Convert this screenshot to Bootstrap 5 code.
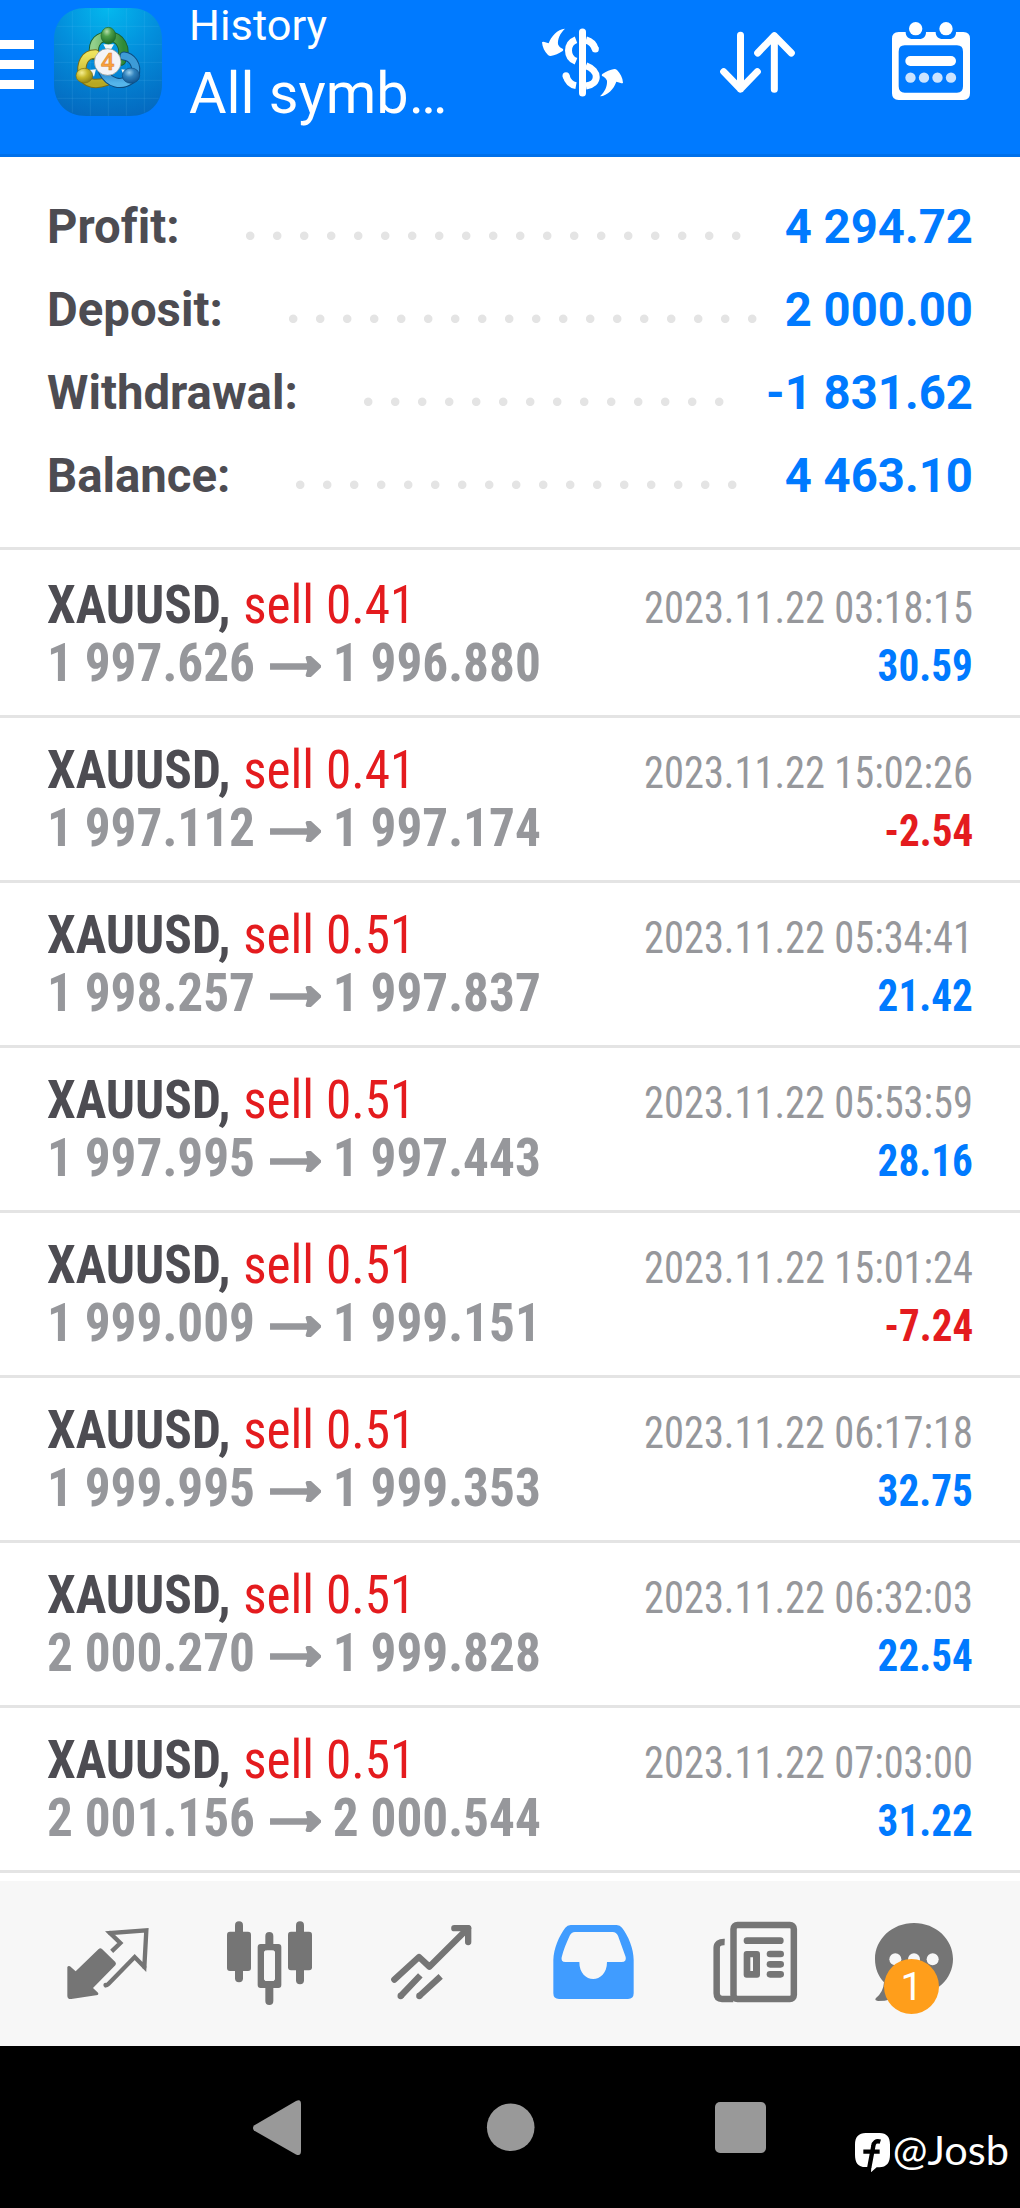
<!DOCTYPE html>
<html lang="en">
<head>
<meta charset="utf-8">
<meta name="viewport" content="width=device-width, initial-scale=1">
<title>History</title>
<link href="https://cdn.jsdelivr.net/npm/bootstrap@5.3.0/dist/css/bootstrap.min.css" rel="stylesheet">
<style>
  :root { --accent: #007aff; --ink: #4d4c52; --soft: #96979b; --loss: #e41b1e; --rule: #e4e4e4; --tool: #757575; }
  body { width: 1020px; height: 2208px; overflow: hidden; background: #fff; color: var(--ink); font-family: Roboto, "Liberation Sans", sans-serif; }
  svg { display: block; flex: none; }

  .topbar { height: 157px; background: var(--accent); border-bottom: 3px solid #0070ea; color: #fff; }
  .burger { margin-top: 40px; }
  .app-logo { margin: 8px 27px 0 20px; }
  .top-sub { font-size: 43.4px; line-height: 51px; }
  .top-main { font-size: 57.6px; line-height: 86px; white-space: nowrap; }
  .top-tools { gap: 96px; padding: 22px 50px 0 0; }

  .summary { padding: 29px 47px; border-bottom: 3px solid var(--rule); font-size: 47.3px; line-height: 83px; font-weight: 700; font-variant-ligatures: none; }
  .leader { height: 83px; margin-left: 66px; width: calc(var(--dots) * 27px); background: radial-gradient(circle at 4.2px 49.8px, var(--rule) 3.8px, transparent 4.7px) 0 0 / 27px 83px; }
  .sum-value { color: var(--accent); }

  .deals { padding: 3px 0 8px; --bs-list-group-border-radius: 0; font-family: "Roboto Condensed", Roboto, sans-serif; }
  .deals .list-group-item { padding: 22.6px 47px 23.4px; height: 165px; border: 0; border-bottom: 3px solid var(--rule); color: var(--ink); background: none; }
  .deal-line { height: 58px; }
  .deal-left { font-size: 54px; line-height: 58px; transform: scaleX(.949); transform-origin: 0 0; white-space: pre; }
  .deal-right { font-size: 44px; line-height: 44px; transform: scaleX(.919); transform-origin: 100% 0; white-space: nowrap; color: var(--soft); }
  .deal-side { color: var(--loss); font-weight: 400; margin-left: 1px; }
  .deal-prices { color: var(--soft); }
  .deal-prices svg { display: inline-block; margin: 0 12.5px 0 15.5px; vertical-align: 4px; }
  .gain { color: var(--accent); transform: scaleX(.935); }
  .drop { color: var(--loss); transform: scaleX(.935); }

  .tabs { height: 165px; padding: 37px 22px 0 26px; background: #f7f7f7; color: var(--tool); }
  .tab { width: 162px; }
  .tab-on { color: #409cff; }
  .tab-count { left: 12px; top: 40.5px; width: 55px; height: 55px; border-radius: 50%; background: #ff9e1b; color: #fff; font-size: 39.5px; line-height: 55px; text-align: center; }

  .sysbar { height: 162px; background: #000; gap: 172px; color: #999; }
  .watermark { right: 11px; top: 82px; color: #fff; font-family: Lato, sans-serif; font-size: 41.5px; line-height: 42px; gap: 2px; }
  .watermark svg { margin-top: 4px; }
</style>
</head>
<body>

<header class="topbar d-flex align-items-start">
  <svg class="burger" width="34" height="49" viewBox="0 0 34 49" fill="#fff"><path d="M0 0h34v9H0zM0 20h34v9H0zM0 40h34v9H0z"/></svg>
  <svg class="app-logo" width="108" height="108" viewBox="12 12 324 324">
    <defs>
      <radialGradient id="lbg" cx=".5" cy="0" r="1.05"><stop offset="0" stop-color="#04b8ee"/><stop offset=".45" stop-color="#038fdc"/><stop offset="1" stop-color="#0468bf"/></radialGradient>
      <radialGradient id="gh" cx=".4" cy=".25" r=".75"><stop offset="0" stop-color="#b5dfaa"/><stop offset=".4" stop-color="#4da04a"/><stop offset="1" stop-color="#1d6b27"/></radialGradient>
      <radialGradient id="yh" cx=".35" cy=".3" r=".75"><stop offset="0" stop-color="#f6ee92"/><stop offset=".45" stop-color="#c9b92b"/><stop offset="1" stop-color="#8a7d12"/></radialGradient>
      <radialGradient id="bh" cx=".4" cy=".3" r=".75"><stop offset="0" stop-color="#9bd0ee"/><stop offset=".4" stop-color="#3283bd"/><stop offset="1" stop-color="#0c4f8c"/></radialGradient>
      <linearGradient id="gr"><stop offset="0" stop-color="#93d08b"/><stop offset="1" stop-color="#2f8a37"/></linearGradient>
      <linearGradient id="yr" x2="0" y2="1"><stop offset="0" stop-color="#eee35c"/><stop offset="1" stop-color="#b7a822"/></linearGradient>
      <linearGradient id="br" x2="0" y2="1"><stop offset="0" stop-color="#2a86cb"/><stop offset="1" stop-color="#55b5ea"/></linearGradient>
    </defs>
    <path d="M108 12H240C300 12 336 50 336 108V240C336 300 298 336 240 336H108C50 336 12 298 12 240V108C12 50 50 12 108 12Z" fill="url(#lbg)"/>
    <path d="M67 22V326M121 13V335M175 12V336M229 13V335M283 22V326M22 67H326M13 121H335M12 175H336M13 229H335M22 283H326" stroke="#8fe0ff" stroke-opacity=".14" stroke-width="2.5"/>
    <g fill="none" stroke-linecap="round" stroke-linejoin="round">
      <path d="M133 152C126 112 150 97 176 97C210 98 232 132 213 170" stroke="#1c6130" stroke-width="31"/>
      <path d="M133 152C126 112 150 97 176 97C210 98 232 132 213 170" stroke="url(#gr)" stroke-width="25"/>
      <path d="M254 217C266 180 242 158 222 156" stroke="#0d4d82" stroke-width="27"/>
      <path d="M254 217C266 180 242 158 222 156" stroke="#3e9cd7" stroke-width="21"/>
      <path d="M136 150C105 150 90 178 98 215C108 240 138 244 170 232" stroke="#796d18" stroke-width="28"/>
      <path d="M136 150C105 150 90 178 98 215C108 240 138 244 170 232" stroke="url(#yr)" stroke-width="22"/>
      <path d="M160 204C178 236 211 248 242 226" stroke="#0d4d82" stroke-width="30"/>
      <path d="M160 204C178 236 211 248 242 226" stroke="url(#br)" stroke-width="24"/>
    </g>
    <path d="M160 121H192L175 150ZM116 198L138 196L132 218ZM214 196L232 198L222 218Z" fill="#f4f8f4"/>
    <ellipse cx="175" cy="95" rx="22" ry="25" fill="url(#gh)" stroke="#1d6b2b" stroke-width="2"/>
    <ellipse cx="103" cy="215" rx="25" ry="22" fill="url(#yh)" stroke="#7b7012" stroke-width="2"/>
    <ellipse cx="243" cy="215" rx="26" ry="23" fill="url(#bh)" stroke="#0d4d82" stroke-width="2"/>
    <circle cx="173" cy="174" r="40" fill="#f3f3f6" stroke="#8a8f8a" stroke-width="2"/>
    <text x="173" y="199" text-anchor="middle" font-family="Open Sans, sans-serif" font-size="70" font-weight="600" fill="#f9a23a" stroke="#d97a2a" stroke-width="1.5">4</text>
  </svg>
  <div>
    <div class="top-sub">History</div>
    <div class="top-main">All symb…</div>
  </div>
  <div class="top-tools d-flex ms-auto">
    <svg width="82" height="78" viewBox="126 66 246 234" fill="none" stroke="#fff" stroke-width="21">
      <path id="swirl" stroke="none" fill="#fff" d="M195 86C180 101 173 115 174 133C178 142 184 145 189 147Q191 150 188 153C176 161 165 166 152 168Q147 168 144 165C134 155 127 142 126 127Q128 124 133 126L146 130C153 109 172 88 195 86Z"/>
      <use href="#swirl" transform="rotate(180 247.5 187.5)"/>
      <path d="M247.500 96V279" stroke-linecap="round"/>
      <path d="M228 119C198 130 198 172 228 184"/>
      <path d="M258 197C299 212 299 252 258 258"/>
      <path d="M258 120Q280 126 286 148M198 227Q205 253 228 257" stroke-linecap="butt"/>
      <circle cx="286" cy="147" r="10.500" fill="#fff" stroke="none"/><circle cx="198" cy="227" r="10.500" fill="#fff" stroke="none"/>
    </svg>
    <svg width="76" height="78" viewBox="660 66 228 234" fill="none" stroke="#fff" stroke-width="21" stroke-linecap="round" stroke-linejoin="round">
      <path d="M721.500 106V267M671 215L721.500 267L772 215M823 268V107M773 159L823 107L874 159"/>
    </svg>
    <svg width="78" height="78" viewBox="1176 66 234 234" fill="#fff">
      <path fill-rule="evenodd" d="M1196 96H1217C1217 110 1226 117 1238 117H1258C1270 117 1278 110 1278 96H1307C1307 110 1316 117 1328 117H1348C1360 117 1368 110 1368 96H1390Q1410 96 1410 116V280Q1410 300 1390 300H1196Q1176 300 1176 280V116Q1176 96 1196 96ZM1214 136Q1196 136 1196 155V259Q1196 278 1214 278H1371Q1389 278 1389 259V155Q1389 136 1371 136Z"/>
      <circle cx="1247" cy="86" r="20"/><circle cx="1338" cy="86" r="20"/>
      <rect x="1216" y="168" width="152" height="30" rx="15"/>
      <g fill="#cce4ff"><circle cx="1231.500" cy="233" r="15.500"/><circle cx="1272" cy="233" r="15.500"/><circle cx="1312.500" cy="233" r="15.500"/><circle cx="1353" cy="233" r="15.500"/></g>
    </svg>
  </div>
</header>

<section class="summary">
  <div class="d-flex"><span>Profit:</span><span class="leader" style="--dots:19"></span><span class="sum-value ms-auto">4 294.72</span></div>
  <div class="d-flex"><span>Deposit:</span><span class="leader" style="--dots:18"></span><span class="sum-value ms-auto">2 000.00</span></div>
  <div class="d-flex"><span>Withdrawal:</span><span class="leader" style="--dots:14"></span><span class="sum-value ms-auto">-1 831.62</span></div>
  <div class="d-flex"><span>Balance:</span><span class="leader" style="--dots:17"></span><span class="sum-value ms-auto">4 463.10</span></div>
</section>

<svg width="0" height="0" class="position-absolute"><symbol id="arrow" viewBox="0 0 134 64" preserveAspectRatio="none"><path d="M0 22H97L93 5Q93 0 98 0H107L134 29V34L107 64H98Q93 64 93 59L97 42H0Z"/></symbol></svg>

<ul class="deals list-group list-group-flush mb-0">
  <li class="list-group-item">
    <div class="deal-line d-flex justify-content-between align-items-baseline"><div class="deal-left fw-bold">XAUUSD, <span class="deal-side">sell 0.41</span></div><div class="deal-right">2023.11.22 03:18:15</div></div>
    <div class="deal-line d-flex justify-content-between align-items-baseline"><div class="deal-left deal-prices fw-bold">1 997.626<svg width="54" height="21" fill="currentColor"><use href="#arrow"/></svg>1 996.880</div><div class="deal-right fw-bold gain">30.59</div></div>
  </li>
  <li class="list-group-item">
    <div class="deal-line d-flex justify-content-between align-items-baseline"><div class="deal-left fw-bold">XAUUSD, <span class="deal-side">sell 0.41</span></div><div class="deal-right">2023.11.22 15:02:26</div></div>
    <div class="deal-line d-flex justify-content-between align-items-baseline"><div class="deal-left deal-prices fw-bold">1 997.112<svg width="54" height="21" fill="currentColor"><use href="#arrow"/></svg>1 997.174</div><div class="deal-right fw-bold drop">-2.54</div></div>
  </li>
  <li class="list-group-item">
    <div class="deal-line d-flex justify-content-between align-items-baseline"><div class="deal-left fw-bold">XAUUSD, <span class="deal-side">sell 0.51</span></div><div class="deal-right">2023.11.22 05:34:41</div></div>
    <div class="deal-line d-flex justify-content-between align-items-baseline"><div class="deal-left deal-prices fw-bold">1 998.257<svg width="54" height="21" fill="currentColor"><use href="#arrow"/></svg>1 997.837</div><div class="deal-right fw-bold gain">21.42</div></div>
  </li>
  <li class="list-group-item">
    <div class="deal-line d-flex justify-content-between align-items-baseline"><div class="deal-left fw-bold">XAUUSD, <span class="deal-side">sell 0.51</span></div><div class="deal-right">2023.11.22 05:53:59</div></div>
    <div class="deal-line d-flex justify-content-between align-items-baseline"><div class="deal-left deal-prices fw-bold">1 997.995<svg width="54" height="21" fill="currentColor"><use href="#arrow"/></svg>1 997.443</div><div class="deal-right fw-bold gain">28.16</div></div>
  </li>
  <li class="list-group-item">
    <div class="deal-line d-flex justify-content-between align-items-baseline"><div class="deal-left fw-bold">XAUUSD, <span class="deal-side">sell 0.51</span></div><div class="deal-right">2023.11.22 15:01:24</div></div>
    <div class="deal-line d-flex justify-content-between align-items-baseline"><div class="deal-left deal-prices fw-bold">1 999.009<svg width="54" height="21" fill="currentColor"><use href="#arrow"/></svg>1 999.151</div><div class="deal-right fw-bold drop">-7.24</div></div>
  </li>
  <li class="list-group-item">
    <div class="deal-line d-flex justify-content-between align-items-baseline"><div class="deal-left fw-bold">XAUUSD, <span class="deal-side">sell 0.51</span></div><div class="deal-right">2023.11.22 06:17:18</div></div>
    <div class="deal-line d-flex justify-content-between align-items-baseline"><div class="deal-left deal-prices fw-bold">1 999.995<svg width="54" height="21" fill="currentColor"><use href="#arrow"/></svg>1 999.353</div><div class="deal-right fw-bold gain">32.75</div></div>
  </li>
  <li class="list-group-item">
    <div class="deal-line d-flex justify-content-between align-items-baseline"><div class="deal-left fw-bold">XAUUSD, <span class="deal-side">sell 0.51</span></div><div class="deal-right">2023.11.22 06:32:03</div></div>
    <div class="deal-line d-flex justify-content-between align-items-baseline"><div class="deal-left deal-prices fw-bold">2 000.270<svg width="54" height="21" fill="currentColor"><use href="#arrow"/></svg>1 999.828</div><div class="deal-right fw-bold gain">22.54</div></div>
  </li>
  <li class="list-group-item border-bottom-1" style="border-bottom-width:3px">
    <div class="deal-line d-flex justify-content-between align-items-baseline"><div class="deal-left fw-bold">XAUUSD, <span class="deal-side">sell 0.51</span></div><div class="deal-right">2023.11.22 07:03:00</div></div>
    <div class="deal-line d-flex justify-content-between align-items-baseline"><div class="deal-left deal-prices fw-bold">2 001.156<svg width="54" height="21" fill="currentColor"><use href="#arrow"/></svg>2 000.544</div><div class="deal-right fw-bold gain">31.22</div></div>
  </li>
</ul>

<nav class="tabs d-flex">
  <div class="tab d-flex justify-content-center">
    <svg width="90" height="90" viewBox="186 174 270 270" fill="currentColor">
      <path d="M296 267Q301 263 306 267L346 306Q350 311 346 316L279 384L294 398Q297 402 293 405L214 417Q202 418 202 407V321Q205 316 210 319L227 334Z"/>
      <path d="M335 274L361 249L330 219L439 211L433 321L404 291L325 372Q320 377 315 376" fill="none" stroke="currentColor" stroke-width="13" stroke-linecap="butt" stroke-linejoin="miter"/>
      <circle cx="317" cy="375" r="7"/><circle cx="433" cy="321" r="6.500"/><circle cx="330" cy="219" r="6.500"/>
    </svg>
  </div>
  <div class="tab d-flex justify-content-center">
    <svg width="90" height="90" viewBox="672 174 270 270" fill="currentColor">
      <rect x="705" y="184" width="24" height="183" rx="12"/><rect x="681" y="215" width="72" height="118" rx="9"/>
      <rect x="888" y="184" width="24" height="189" rx="12"/><rect x="864" y="215" width="72" height="116" rx="9"/>
      <rect x="796" y="216" width="24" height="60" rx="12"/><rect x="796" y="370" width="24" height="65" rx="12"/>
      <path d="M797 265H819V262H797ZM796 372H820V384H796Z"/>
      <path fill-rule="evenodd" d="M782 252H835Q844 252 844 261V375Q844 384 835 384H782Q773 384 773 375V261Q773 252 782 252ZM802 271Q792 271 792 281V353Q792 363 802 363H815Q825 363 825 353V281Q825 271 815 271Z"/>
      <rect x="792" y="271" width="33" height="92" rx="10" fill="#f7f7f7"/>
    </svg>
  </div>
  <div class="tab d-flex justify-content-center">
    <svg width="90" height="90" viewBox="1158 174 270 270" fill="none" stroke="currentColor" stroke-width="19">
      <path d="M1183 359L1257 291L1288 320L1404 205" stroke-linecap="round" stroke-linejoin="round"/>
      <path d="M1363 204.500H1404.500V246" stroke-linecap="round" stroke-linejoin="round"/>
      <path d="M1202 408L1261 346M1258 408L1322 349"/>
      <g fill="currentColor" stroke="none"><circle cx="1202" cy="408" r="9.500"/><circle cx="1258" cy="408" r="9.500"/></g>
    </svg>
  </div>
  <div class="tab tab-on d-flex justify-content-center">
    <svg width="90" height="90" viewBox="84 174 270 270" fill="currentColor">
      <path fill-rule="evenodd" d="M152 195H290Q300 195 306 203C325 228 341 265 341 300V400Q341 417 324 417H117Q100 417 100 400V300C101 265 117 228 136 203Q142 195 152 195ZM165 216Q154 217 149 227C139 250 130 269 125 292Q122 306 136 306H178C178 374 261 374 261 306H305Q320 306 317 291L294 227Q289 217 278 216Z"/>
    </svg>
  </div>
  <div class="tab d-flex justify-content-center">
    <svg width="90" height="90" viewBox="570 174 270 270" fill="currentColor">
      <g fill="none" stroke="currentColor" stroke-width="19.500"><rect x="640.500" y="195" width="181" height="222" rx="12"/><path d="M614 246Q590 245 590 264V400Q590 417 606 417H640"/></g>
      <rect x="671" y="232" width="120" height="20" rx="10"/>
      <path fill-rule="evenodd" d="M680 273H711Q720 273 720 282V344Q720 353 711 353H680Q671 353 671 344V282Q671 273 680 273ZM691 292V333H699V292Z"/>
      <rect x="740" y="272" width="52" height="20" rx="10"/><rect x="740" y="303" width="52" height="20" rx="10"/><rect x="740" y="333" width="52" height="20" rx="10"/>
    </svg>
  </div>
  <div class="tab d-flex justify-content-center">
    <div class="position-relative">
      <svg width="90" height="90" viewBox="1056 174 270 270" fill="currentColor">
        <path d="M1182 189C1248 189 1299 238 1299 297C1299 357 1248 405 1182 405Q1165 405 1148 401Q1115 423 1074 423Q1062 421 1068 414Q1090 397 1092 367C1075 349 1065 325 1065 297C1065 238 1116 189 1182 189Z"/>
        <g fill="#f7f7f7"><circle cx="1126" cy="298" r="18"/><circle cx="1182" cy="298" r="18"/><circle cx="1238" cy="298" r="18"/></g>
      </svg>
      <div class="tab-count position-absolute">1</div>
    </div>
  </div>
</nav>

<footer class="sysbar d-flex justify-content-center align-items-center position-relative">
  <svg width="60" height="60" viewBox="0 0 60 60" fill="currentColor"><path d="M6 28.500Q4 31 6 33.500L48 57.500Q53 59.500 53 54V7Q53 1.500 48 4Z"/></svg>
  <svg width="60" height="60" viewBox="0 0 60 60" fill="currentColor"><circle cx="30.700" cy="30.300" r="23.800"/></svg>
  <svg width="60" height="60" viewBox="0 0 60 60" fill="currentColor"><rect x="3" y="5" width="51" height="51" rx="5"/></svg>
  <div class="watermark d-flex position-absolute">
    <svg width="37" height="42" viewBox="0 0 111 126" fill="#fff">
      <path d="M35 3H77C98 3 108 15 108 38V68C108 92 98 105 76 106H68L51 121L52 105H35C12 105 3 92 3 68V38C3 15 14 3 35 3Z"/>
      <path d="M79 29C66 25 59 31 58 42L46 106M28 59H77" fill="none" stroke="#000" stroke-width="13"/>
    </svg>
    <span>@Josb</span>
  </div>
</footer>

<script src="https://cdn.jsdelivr.net/npm/bootstrap@5.3.0/dist/js/bootstrap.bundle.min.js"></script>
</body>
</html>
